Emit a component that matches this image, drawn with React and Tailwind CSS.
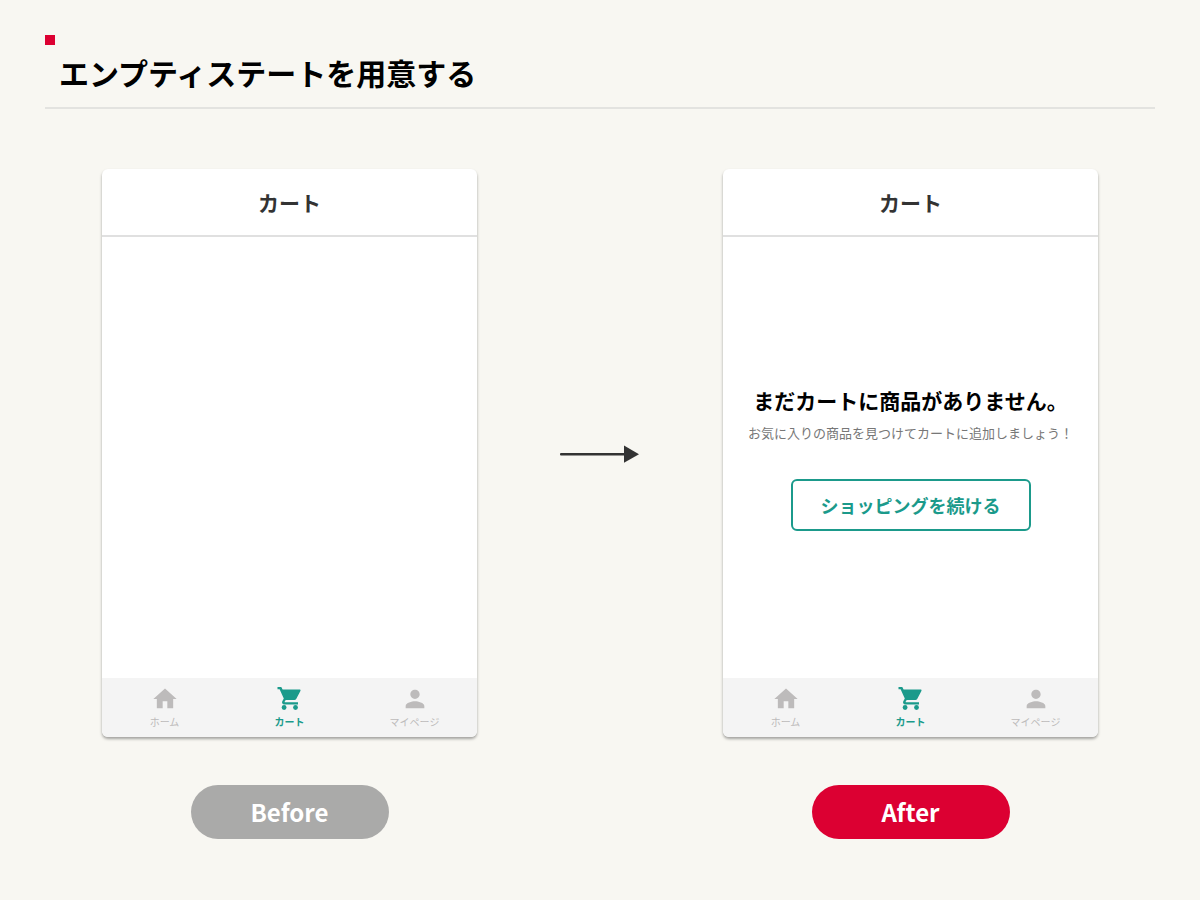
import React from "react";
import { MdHome, MdPerson } from "react-icons/md";

const CartIcon = ({ className }) => {
  return (
    <svg className={className} viewBox="0 0 28 28" fill="currentColor" aria-hidden="true">
      <path d="M1.500 2 H5.300 L6.600 4.500 H23.600 C24.400 4.500 24.800 5.200 24.400 5.900 L20.200 13.900 C19.800 14.600 19.200 15 18.400 15 H9.700 L8.600 16.700 C8.400 17 8.600 17.200 8.900 17.200 H22 V19.400 H8.200 C6.400 19.400 5.500 17.600 6.300 16.200 L7.800 13.400 L3.600 4.300 H1.500 Z" />
      <circle cx="8.100" cy="22.500" r="2.400" />
      <circle cx="19.500" cy="22.500" r="2.400" />
    </svg>
  );
};

const tabs = [
  { label: "ホーム", Icon: MdHome },
  { label: "カート", Icon: CartIcon, active: true },
  { label: "マイページ", Icon: MdPerson },
];

const TabBar = () => {
  return (
    <nav className="grid grid-cols-3 bg-[#f4f4f4] pt-[7px] pb-[7px]">
      {tabs.map(({ label, Icon, active }) => (
        <a
          key={label}
          href="#"
          className={
            active
              ? "flex flex-col items-center gap-px text-[10px] leading-4 font-bold text-[#1b9a8b]"
              : "flex flex-col items-center gap-px text-[10px] leading-4 text-[#bdbbbb]"
          }
        >
          <Icon className="size-7" />
          {label}
        </a>
      ))}
    </nav>
  );
};

const Phone = ({ children }) => {
  return (
    <section className="flex min-h-[568px] flex-col overflow-hidden rounded-md bg-white shadow-[0_2px_3px_rgba(0,0,0,0.35)]">
      <h2 className="border-b-2 border-[#e0e0e0] pt-[18px] pb-[18px] text-center text-[21px] leading-[30px] font-bold text-[#333]">
        カート
      </h2>
      <div className="flex flex-1 flex-col items-center justify-center">{children}</div>
      <TabBar />
    </section>
  );
};

const Arrow = () => {
  return (
    <svg className="h-5 w-20 justify-self-center self-center" viewBox="0 0 80 20" fill="#333">
      <rect x="0" y="10" width="67" height="2.500" rx="1" />
      <path d="M64 2.500 L79 11.200 L64 19.800 Z" />
    </svg>
  );
};

const App = () => {
  return (
    <div
      lang="ja"
      className="min-h-screen bg-[#f8f7f2] px-[45px] pt-[35px] pb-[61px] font-['Noto_Sans_CJK_JP',sans-serif]"
    >
      <header className="border-b-2 border-[#e3e3e0]">
        <div className="size-[10px] bg-[#dc0032]"></div>
        <h1 className="px-[14px] pt-[6px] pb-[14px] text-[30px] leading-[42px] font-bold text-black">
          エンプティステートを用意する
        </h1>
      </header>

      <main className="grid grid-cols-[minmax(0,375px)_minmax(80px,1fr)_minmax(0,375px)] gap-y-12 px-[57px] pt-[60px]">
        <Phone />
        <Arrow />
        <Phone>
          <h3 className="text-[21px] leading-[30px] font-bold text-black">
            まだカートに商品がありません。
          </h3>
          <p className="mt-2 text-[13px] leading-5 text-[#777]">
            お気に入りの商品を見つけてカートに追加しましょう！
          </p>
          <button
            type="button"
            className="mt-9 rounded-md border-2 border-[#1b9a8b] px-7 py-[10px] text-lg font-bold text-[#1b9a8b]"
          >
            ショッピングを続ける
          </button>
        </Phone>

        <p className="w-[198px] justify-self-center rounded-full bg-[#aaaaa9] py-[9px] text-center text-2xl leading-9 font-bold text-white">
          Before
        </p>
        <p className="col-start-3 w-[198px] justify-self-center rounded-full bg-[#dc0032] py-[9px] text-center text-2xl leading-9 font-bold text-white">
          After
        </p>
      </main>
    </div>
  );
};

export default App;
